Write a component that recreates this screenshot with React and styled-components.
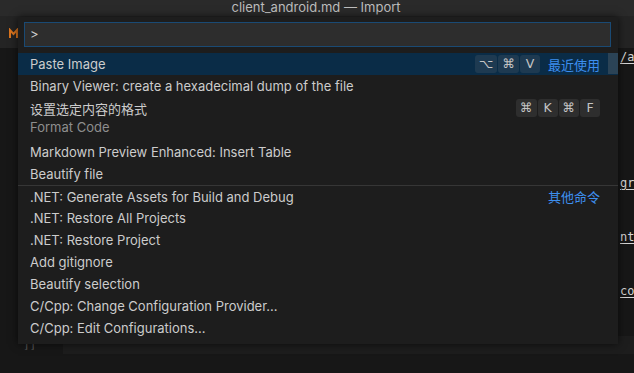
import React from "react";
import styled, { createGlobalStyle } from "styled-components";

const Global = createGlobalStyle`
  html, body { margin: 0; padding: 0; background: #171717; }
  * { box-sizing: border-box; }
`;

const UI = `"Inter", "Noto Sans", "Noto Sans CJK SC", sans-serif`;
const MONO = `"DejaVu Sans Mono", "Liberation Mono", monospace`;

const Window = styled.div`
  position: relative;
  width: 634px;
  height: 373px;
  overflow: hidden;
  display: flex;
  flex-direction: column;
  background: #171717;
  font-family: ${UI};
`;

const TitleBar = styled.div`
  height: 16px;
  flex: none;
  background: #2a2a2a;
  color: #bdbdbd;
  font-size: 13px;
  line-height: 14px;
  text-align: center;
  padding-right: 2px;
  white-space: nowrap;
`;

const TabBar = styled.div`
  height: 32px;
  flex: none;
  background: #242424;
  display: flex;
  align-items: center;
  padding-left: 9px;
  padding-top: 2px;
`;

const Editor = styled.div`
  flex: 1;
  display: flex;
  flex-direction: column;
`;

const Line = styled.div`
  height: 18px;
  flex: none;
  display: flex;
  font-family: ${MONO};
  font-size: 12px;
  line-height: 18px;
  color: #d4d4d4;
  white-space: nowrap;
  ${(p) =>
    p.$current &&
    `background: linear-gradient(to right, transparent 63px, #1d1d1d 63px);`}
`;

const Gutter = styled.div`
  width: 63px;
  flex: none;
  padding-left: 23px;
  color: #5a5a5a;
  font-size: 11px;
`;

const Code = styled.div`
  flex: 1;
  overflow: hidden;
  padding-left: 557px;
`;

const Link = styled.span`
  text-decoration: underline;
  text-underline-offset: 2px;
`;

const Panel = styled.div`
  position: absolute;
  left: 18px;
  top: 17px;
  width: 600px;
  height: 327px;
  background: #1d1d1d;
  box-shadow: 0 0 8px rgba(0, 0, 0, 0.65);
  display: flex;
  flex-direction: column;
  padding-top: 5px;
`;

const InputBox = styled.div`
  margin: 0 7px 0 6px;
  height: 25px;
  background: #2d2d2d;
  border: 1px solid #1a4a74;
  color: #cccccc;
  font-size: 13px;
  line-height: 23px;
  padding-left: 5px;
`;

const List = styled.div`
  position: relative;
  margin-top: 6px;
  display: flex;
  flex-direction: column;
`;

const Scroll = styled.div`
  position: absolute;
  right: 0;
  top: 0;
  width: 10px;
  height: 21px;
  background: rgba(121, 121, 121, 0.3);
`;

const Row = styled.div`
  display: flex;
  flex-direction: column;
  padding: 0 18px 0 12px;
  background: ${(p) => (p.$selected ? "#0a2c47" : "transparent")};
  border-top: ${(p) => (p.$sep ? "1px solid #363636" : "none")};
  padding-bottom: ${(p) => (p.$detail ? "6px" : "0")};
`;

const Main = styled.div`
  height: ${(p) => (p.$sep ? "21px" : "22px")};
  display: flex;
  align-items: center;
  gap: 8px;
`;

const Label = styled.span`
  flex: 1;
  color: #cccccc;
  font-size: 13px;
  white-space: nowrap;
`;

const Detail = styled.div`
  height: 16px;
  line-height: 16px;
  color: #8e8e8e;
  font-size: 13px;
`;

const Keys = styled.div`
  display: flex;
  gap: 1px;
`;

const Key = styled.span`
  min-width: 20px;
  height: 18px;
  padding: 0 4px;
  border-radius: 3px;
  background: rgba(128, 128, 128, 0.17);
  color: #c4c4c4;
  font-size: 12.5px;
  line-height: 18px;
  text-align: center;
  font-family: "DejaVu Sans", ${UI};
`;

const Tag = styled.span`
  color: #3d8fef;
  font-size: 13px;
  font-family: "Noto Sans CJK SC", sans-serif;
`;

const MdIcon = () => (
  <svg width="9" height="11" viewBox="0 0 9 11">
    <path d="M1 10 V2 L4.5 6 L8 2 V10" fill="none" stroke="#d9741e" strokeWidth="2" />
  </svg>
);

const items = [
  { label: "Paste Image", keys: ["⌥", "⌘", "V"], tag: "最近使用", selected: true },
  { label: "Binary Viewer: create a hexadecimal dump of the file" },
  { label: "设置选定内容的格式", detail: "Format Code", keys: ["⌘", "K", "⌘", "F"] },
  { label: "Markdown Preview Enhanced: Insert Table" },
  { label: "Beautify file" },
  { label: ".NET: Generate Assets for Build and Debug", tag: "其他命令", sep: true },
  { label: ".NET: Restore All Projects" },
  { label: ".NET: Restore Project" },
  { label: "Add gitignore" },
  { label: "Beautify selection" },
  { label: "C/Cpp: Change Configuration Provider..." },
  { label: "C/Cpp: Edit Configurations..." },
];

const codeLines = {
  0: <Link>/a</Link>,
  7: <Link>gro</Link>,
  10: <Link>nt</Link>,
  13: <Link>coo</Link>,
};

export default function App() {
  return (
    <>
      <Global />
      <Window>
        <TitleBar>client_android.md — Import</TitleBar>
        <TabBar>
          <MdIcon />
        </TabBar>
        <Editor>
          {Array.from({ length: 18 }).map((_, i) => (
            <Line key={i} $current={i === 16}>
              <Gutter>{i === 16 ? "]]" : ""}</Gutter>
              <Code>{codeLines[i] || ""}</Code>
            </Line>
          ))}
        </Editor>
        <Panel>
          <InputBox>&gt;</InputBox>
          <List>
            <Scroll />
            {items.map((it, i) => (
              <Row key={i} $selected={it.selected} $sep={it.sep} $detail={!!it.detail}>
                <Main $sep={it.sep}>
                  <Label>{it.label}</Label>
                  {it.keys && (
                    <Keys>
                      {it.keys.map((k, j) => (
                        <Key key={j}>{k}</Key>
                      ))}
                    </Keys>
                  )}
                  {it.tag && <Tag>{it.tag}</Tag>}
                </Main>
                {it.detail && <Detail>{it.detail}</Detail>}
              </Row>
            ))}
          </List>
        </Panel>
      </Window>
    </>
  );
}
